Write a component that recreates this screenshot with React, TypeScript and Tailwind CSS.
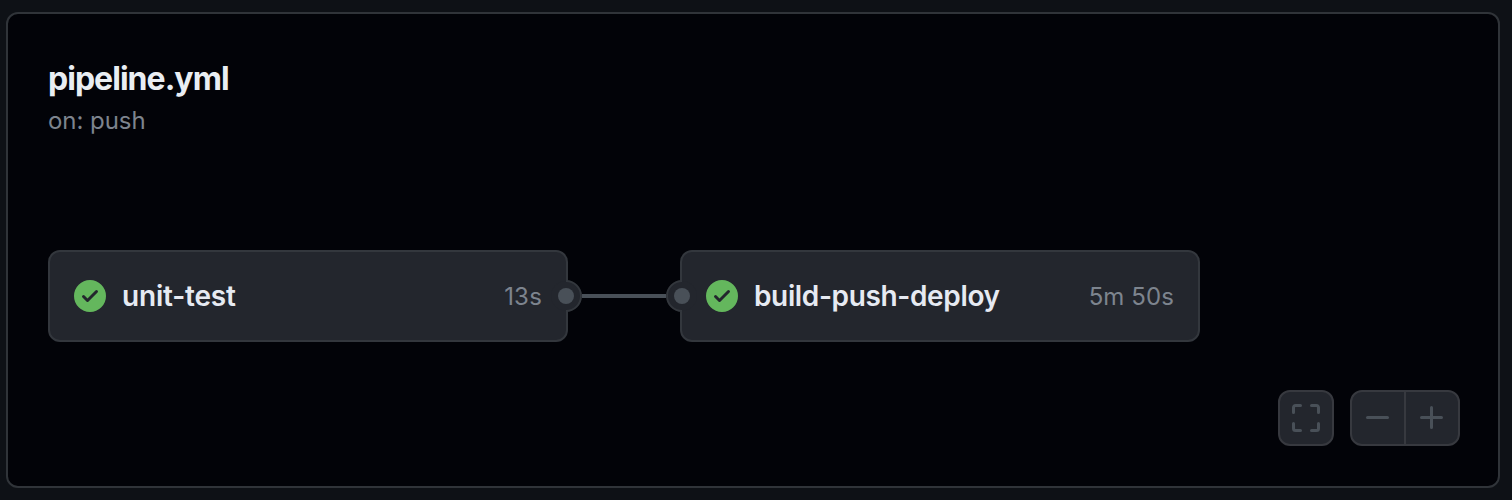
import type { ReactNode } from "react";

function CheckIcon() {
  return (
    <svg viewBox="0 0 16 16" className="size-8 shrink-0 fill-[#64b75d]">
      <path d="M8 16A8 8 0 1 1 8 0a8 8 0 0 1 0 16Zm3.78-9.72a.751.751 0 0 0-.018-1.042.751.751 0 0 0-1.042-.018L6.75 9.19 5.28 7.72a.751.751 0 0 0-1.042.018.751.751 0 0 0-.018 1.042l2 2a.75.75 0 0 0 1.06 0Z" />
    </svg>
  );
}

function Port({ side }: { side: "left" | "right" }) {
  return (
    <svg
      viewBox="0 0 32 32"
      className={
        side === "right"
          ? "absolute top-[28px] -right-4 size-8"
          : "absolute top-[28px] -left-4 size-8 -scale-x-100"
      }
    >
      <circle cx="16" cy="16" r="15" className="fill-[#23262d]" />
      <path d="M16 1a15 15 0 0 1 0 30" className="fill-none stroke-[#33373d]" strokeWidth="2" />
      <circle cx="16" cy="16" r="8" className="fill-[#495058]" />
    </svg>
  );
}

function Job({ name, time, port, nameClass, timeClass }: {
  name: string;
  time: string;
  port: "left" | "right";
  nameClass: string;
  timeClass: string;
}) {
  return (
    <div className="relative flex h-[92px] w-[520px] items-center rounded-xl border-2 border-[#33373d] bg-[#23262d] px-6">
      <CheckIcon />
      <span className={`ml-4 flex-1 text-[28px] leading-8 font-semibold text-[#e6eaf2] ${nameClass}`}>{name}</span>
      <span className={`pt-0.5 text-2xl text-[#7d848e] ${timeClass}`}>{time}</span>
      <Port side={port} />
    </div>
  );
}

function Glyph({ children }: { children: ReactNode }) {
  return (
    <svg viewBox="0 0 16 16" className="size-8 fill-[#495058]">
      {children}
    </svg>
  );
}

export default function App() {
  return (
    <div className="h-[500px] w-[1512px] bg-[#0e1116] pt-3 pl-1.5 font-['Inter',sans-serif]">
      <main className="flex h-[476px] w-[1494px] flex-col rounded-xl border-2 border-[#303439] bg-[#020308] px-10 pb-10">
        <h1 className="mt-[44px] text-[32px] leading-[42px] font-bold tracking-[-0.97px] text-[#e9eef3]">pipeline.yml</h1>
        <p className="text-2xl leading-[42px] tracking-[-0.05px] text-[#7d848e]">on: push</p>
        <div className="mt-[108px] flex items-center">
          <Job name="unit-test" time="13s" port="right" nameClass="tracking-[-0.2px]" timeClass="tracking-[0.2px]" />
          <div className="mx-[14px] h-1 w-[84px] bg-[#495058]" />
          <Job name="build-push-deploy" time="5m 50s" port="left" nameClass="tracking-[-0.36px]" timeClass="tracking-[0.1px]" />
        </div>
        <div className="-mr-0.5 mt-auto flex justify-end gap-4">
          <button aria-label="Fit to window" className="flex size-14 items-center justify-center rounded-xl border-2 border-[#37393f] bg-[#23262d]">
            <Glyph>
              <path d="M1.75 10a.75.75 0 0 1 .75.75v2.5c0 .138.112.25.25.25h2.5a.75.75 0 0 1 0 1.5h-2.5A1.75 1.75 0 0 1 1 13.25v-2.5a.75.75 0 0 1 .75-.75Zm12.5 0a.75.75 0 0 1 .75.75v2.5A1.75 1.75 0 0 1 13.25 15h-2.5a.75.75 0 0 1 0-1.5h2.5a.25.25 0 0 0 .25-.25v-2.5a.75.75 0 0 1 .75-.75ZM2.75 2.5a.25.25 0 0 0-.25.25v2.5a.75.75 0 0 1-1.5 0v-2.5C1 1.784 1.784 1 2.75 1h2.5a.75.75 0 0 1 0 1.5ZM10 1.75a.75.75 0 0 1 .75-.75h2.5c.966 0 1.75.784 1.75 1.75v2.5a.75.75 0 0 1-1.5 0v-2.5a.25.25 0 0 0-.25-.25h-2.5a.75.75 0 0 1-.75-.75Z" />
            </Glyph>
          </button>
          <div className="flex h-14 w-[110px] overflow-hidden rounded-xl border-2 border-[#37393f] bg-[#23262d]">
            <button aria-label="Zoom out" className="flex w-[54px] items-center justify-center border-r-2 border-[#37393f]">
              <Glyph>
                <path d="M2.75 7h10a.75.75 0 0 1 0 1.5h-10a.75.75 0 0 1 0-1.5Z" />
              </Glyph>
            </button>
            <button aria-label="Zoom in" className="flex w-[52px] items-center justify-center">
              <Glyph>
                <path d="M7.75 2a.75.75 0 0 1 .75.75V7h4.25a.75.75 0 0 1 0 1.5H8.5v4.25a.75.75 0 0 1-1.5 0V8.5H2.75a.75.75 0 0 1 0-1.5H7V2.75A.75.75 0 0 1 7.75 2Z" />
              </Glyph>
            </button>
          </div>
        </div>
      </main>
    </div>
  );
}
